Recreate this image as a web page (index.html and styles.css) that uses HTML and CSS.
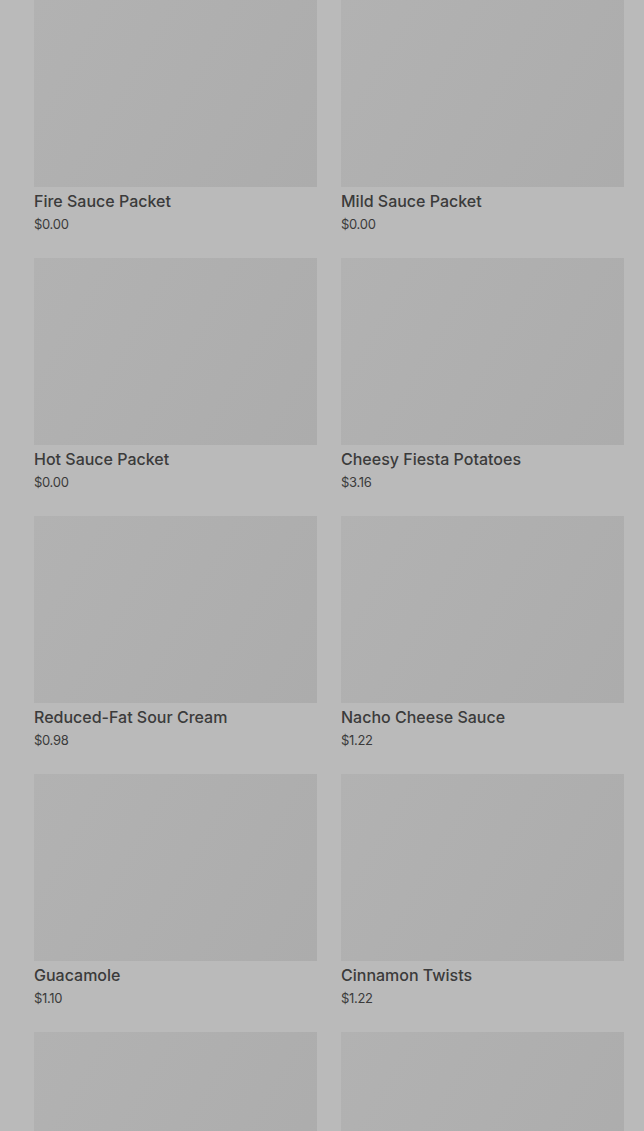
FILE: index.html
```html
<!DOCTYPE html>
<html>
<head>
    <title>Sides</title>
    <link rel="stylesheet" href="styles.css">
</head>
<body>
    <div class="menu-grid">
        <div class="item">
            <div class="item-image"></div>
            <div class="item-name">Fire Sauce Packet</div>
            <div class="item-price">$0.00</div>
        </div>
        <div class="item">
            <div class="item-image"></div>
            <div class="item-name">Mild Sauce Packet</div>
            <div class="item-price">$0.00</div>
        </div>
        <div class="item">
            <div class="item-image"></div>
            <div class="item-name">Hot Sauce Packet</div>
            <div class="item-price">$0.00</div>
        </div>
        <div class="item">
            <div class="item-image"></div>
            <div class="item-name">Cheesy Fiesta Potatoes</div>
            <div class="item-price">$3.16</div>
        </div>
        <div class="item">
            <div class="item-image"></div>
            <div class="item-name">Reduced-Fat Sour Cream</div>
            <div class="item-price">$0.98</div>
        </div>
        <div class="item">
            <div class="item-image"></div>
            <div class="item-name">Nacho Cheese Sauce</div>
            <div class="item-price">$1.22</div>
        </div>
        <div class="item">
            <div class="item-image"></div>
            <div class="item-name">Guacamole</div>
            <div class="item-price">$1.10</div>
        </div>
        <div class="item">
            <div class="item-image"></div>
            <div class="item-name">Cinnamon Twists</div>
            <div class="item-price">$1.22</div>
        </div>
        <div class="item">
            <div class="item-image"></div>
            <div class="item-name">Chips and Salsa</div>
            <div class="item-price">$1.58</div>
        </div>
        <div class="item">
            <div class="item-image"></div>
            <div class="item-name">Black Beans</div>
            <div class="item-price">$1.58</div>
        </div>
    </div>
</body>
</html>
```

FILE: styles.css
```css
body {
    margin: 0;
    background-color: #bababa;
    font-family: Inter, "Noto Sans", sans-serif;
    color: #3b3b3b;
}

.menu-grid {
    display: grid;
    grid-template-columns: 283px 283px;
    column-gap: 24px;
    row-gap: 25px;
    padding: 0 20px 0 34px;
}

.item-image {
    height: 187px;
    background: linear-gradient(120deg, #b2b2b2, #acacac);
}

.item-name {
    margin-top: 3px;
    font-size: 16px;
    font-weight: 500;
    line-height: 22px;
}

.item-price {
    margin-top: 3px;
    font-size: 13px;
    line-height: 18px;
    letter-spacing: -0.3px;
}
```
